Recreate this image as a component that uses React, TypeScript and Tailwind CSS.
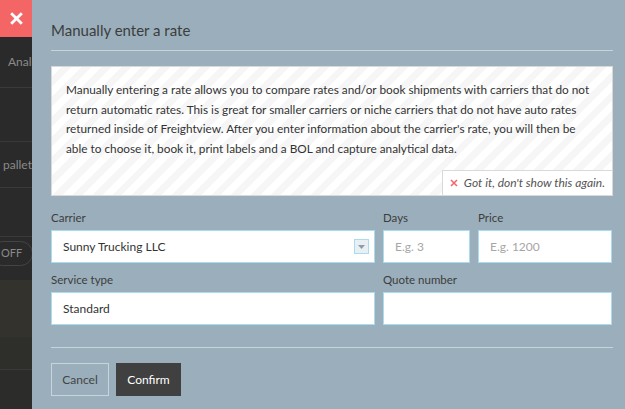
import { useState } from "react";

const FONT = { fontFamily: "Lato, 'Open Sans', sans-serif" };

export default function App() {
  const [days, setDays] = useState("");
  const [price, setPrice] = useState("");
  const [quote, setQuote] = useState("");

  return (
    <div className="flex h-[409px] w-[625px] overflow-hidden" style={FONT}>
      {/* page behind the overlay */}
      <div className="flex w-[32px] shrink-0 flex-col overflow-hidden bg-[#2a2a2a] text-[12px] text-[#8a8a8a]">
        <button className="flex h-[37px] w-[32px] shrink-0 items-center justify-center bg-[#f46565] text-white">
          <svg width="13" height="13" viewBox="0 0 12 12">
            <path d="M2 2 L10 10 M10 2 L2 10" stroke="white" strokeWidth="2.6" strokeLinecap="square" />
          </svg>
        </button>
        <div className="flex h-[51px] items-center border-b border-[#3a3a3a] pl-[8px] whitespace-nowrap">Anal</div>
        <div className="h-[54px] border-b border-[#3a3a3a]" />
        <div className="flex h-[46px] items-center border-b border-[#3a3a3a] pl-[3px] whitespace-nowrap">pallet</div>
        <div className="h-[49px] border-b border-[#3a3a3a]" />
        <div className="flex h-[43px] items-start pt-[4px]">
          <span className="ml-[-10px] rounded-full border border-[#444] px-[10px] py-[3px] text-[11px]">OFF</span>
        </div>
        <div className="h-[57px] bg-[#33322c]" />
        <div className="h-[33px] border-b border-[#3a3a3a] bg-[#2e2e2b]" />
        <div className="flex-1 bg-[#2c2c2a]" />
      </div>

      {/* modal */}
      <div className="flex-1 bg-[#9aafbb] pl-[19px] pr-[12px] text-[#3d3d3d]">
        <h2 className="pt-[20px] pb-[10px] text-[15px] leading-[20px]">Manually enter a rate</h2>
        <div className="h-px bg-[#c6d4dc]" />

        <div className="mt-[15px] flex flex-col border border-[#d9d9d9] bg-[repeating-linear-gradient(135deg,#ffffff_0px,#ffffff_7px,#f6f6f6_7px,#f6f6f6_14px)]">
          <p className="px-[14px] pt-[13px] text-[11.8px] leading-[19.5px] whitespace-nowrap text-[#333]">
            Manually entering a rate allows you to compare rates and/or book shipments with carriers that do not
            <br />
            return automatic rates. This is great for smaller carriers or niche carriers that do not have auto rates
            <br />
            returned inside of Freightview. After you enter information about the carrier's rate, you will then be
            <br />
            able to choose it, book it, print labels and a BOL and capture analytical data.
          </p>
          <div className="mt-[12px] flex justify-end">
            <button className="flex h-[25px] items-center gap-[6px] border-t border-l border-[#d9d9d9] bg-white px-[7px] text-[12px] italic text-[#555]">
              <svg width="8" height="8" viewBox="0 0 8 8">
                <path d="M1 1 L7 7 M7 1 L1 7" stroke="#f0686b" strokeWidth="1.6" />
              </svg>
              Got it, don't show this again.
            </button>
          </div>
        </div>

        <div className="mt-[15px] grid grid-cols-[324px_87px_134px] gap-x-[8px]">
          <label className="text-[11.5px] leading-[14px]">Carrier</label>
          <label className="text-[11.5px] leading-[14px]">Days</label>
          <label className="text-[11.5px] leading-[14px]">Price</label>

          <div className="relative mt-[5px] flex h-[33px] items-center border border-[#a9dcef] bg-white pl-[11px] text-[12px] text-[#333]">
            Sunny Trucking LLC
            <span className="absolute right-[5px] top-[8px] flex h-[15px] w-[15px] items-center justify-center border border-[#a9dcef] bg-[#e9eff2]">
              <svg width="7" height="4" viewBox="0 0 7 4">
                <path d="M0 0 H7 L3.5 4 Z" fill="#8e9ea8" />
              </svg>
            </span>
          </div>
          <input
            value={days}
            onChange={(e) => setDays(e.target.value)}
            placeholder="E.g. 3"
            className="mt-[5px] h-[33px] w-full border border-[#a9dcef] bg-white pl-[11px] text-[12px] outline-none placeholder:text-[#a6a6a6]"
          />
          <input
            value={price}
            onChange={(e) => setPrice(e.target.value)}
            placeholder="E.g. 1200"
            className="mt-[5px] h-[33px] w-full border border-[#a9dcef] bg-white pl-[11px] text-[12px] outline-none placeholder:text-[#a6a6a6]"
          />

          <label className="col-span-1 mt-[10px] text-[11.5px] leading-[14px]">Service type</label>
          <label className="col-span-2 mt-[10px] text-[11.5px] leading-[14px]">Quote number</label>

          <div className="mt-[5px] flex h-[33px] items-center border border-[#a9dcef] bg-white pl-[11px] text-[12px] text-[#333]">
            Standard
          </div>
          <input
            value={quote}
            onChange={(e) => setQuote(e.target.value)}
            className="col-span-2 mt-[5px] h-[33px] w-full border border-[#a9dcef] bg-white pl-[11px] text-[12px] outline-none"
          />
        </div>

        <div className="mt-[22px] h-px bg-[#c6d4dc]" />

        <div className="mt-[15px] flex gap-[7px]">
          <button className="h-[33px] w-[58px] border border-[#c6d4dc] text-[12px] text-[#444]">Cancel</button>
          <button className="h-[33px] w-[65px] bg-[#404040] text-[12px] text-white">Confirm</button>
        </div>
      </div>
    </div>
  );
}
